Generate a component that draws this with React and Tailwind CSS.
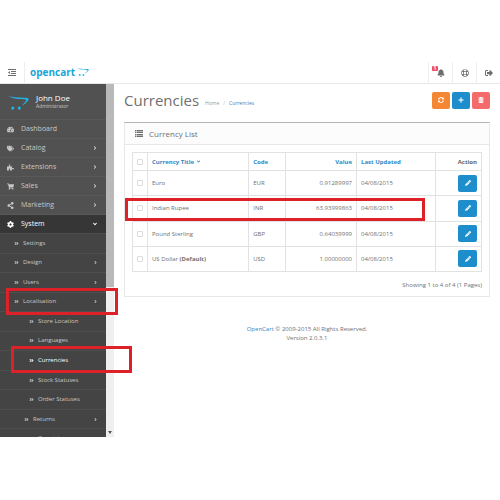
import React from "react";
import {
  FaAngleDoubleRight,
  FaAngleDown,
  FaAngleRight,
  FaBell,
  FaCog,
  FaPencilAlt,
  FaPlus,
  FaPuzzlePiece,
  FaRegLifeRing,
  FaShareAlt,
  FaShoppingCart,
  FaSignOutAlt,
  FaSyncAlt,
  FaTachometerAlt,
  FaTags,
  FaTrashAlt,
} from "react-icons/fa";

const menu = [
  { icon: FaTachometerAlt, label: "Dashboard" },
  { icon: FaTags, label: "Catalog", arrow: true },
  { icon: FaPuzzlePiece, label: "Extensions", arrow: true },
  { icon: FaShoppingCart, label: "Sales", arrow: true },
  { icon: FaShareAlt, label: "Marketing", arrow: true },
  { icon: FaCog, label: "System", arrow: true, open: true },
];

const subMenu = [
  { label: "Settings", indent: "pl-[14px]" },
  { label: "Design", indent: "pl-[14px]", arrow: true },
  { label: "Users", indent: "pl-[14px]", arrow: true },
  {
    label: "Localisation",
    indent: "pl-[14px]",
    arrow: true,
    mark: "left-[6px] w-[112px]",
  },
  { label: "Store Location", indent: "pl-[29px]" },
  { label: "Languages", indent: "pl-[29px]" },
  {
    label: "Currencies",
    indent: "pl-[29px]",
    active: true,
    mark: "left-[11px] w-[121px]",
  },
  { label: "Stock Statuses", indent: "pl-[29px]" },
  { label: "Order Statuses", indent: "pl-[29px]" },
  { label: "Returns", indent: "pl-[24px]", arrow: true },
  { label: "Countries", indent: "pl-[29px]" },
];

const currencies = [
  { title: "Euro", code: "EUR", value: "0.91289997", date: "04/08/2015" },
  {
    title: "Indian Rupee",
    code: "INR",
    value: "63.93999863",
    date: "04/08/2015",
    marked: true,
  },
  { title: "Pound Sterling", code: "GBP", value: "0.64039999", date: "04/08/2015" },
  {
    title: "US Dollar",
    isDefault: true,
    code: "USD",
    value: "1.00000000",
    date: "04/08/2015",
  },
];

const CartMark = ({ className }) => (
  <svg viewBox="0 0 63 43" className={className} fill="#22b0e0" aria-hidden="true">
    <path d="M0 0C12 4 28 5 50 5c12 0 16 3 10 10-5 6-11 11-18 15 5-7 14-14 13-18C52 8 18 13 0 0Z" />
    <circle cx="14" cy="37" r="5" />
    <circle cx="34" cy="37" r="5" />
  </svg>
);

const OutdentIcon = () => (
  <svg viewBox="0 0 16 14" className="h-[7px] w-2" fill="currentColor" aria-hidden="true">
    <path d="M0 0h16v2H0zM6 4h10v2H6zM6 8h10v2H6zM0 12h16v2H0zM4 4v6L0 7z" />
  </svg>
);

const ListIcon = () => (
  <svg viewBox="0 0 16 14" className="h-[7px] w-2" fill="currentColor" aria-hidden="true">
    <path d="M0 0h3v3H0zM4 0h12v3H4zM0 4h3v2H0zM4 4h12v2H4zM0 8h3v2H0zM4 8h12v2H4zM0 11h3v3H0zM4 11h12v3H4z" />
  </svg>
);

const Header = () => (
  <header className="flex h-[22px] items-stretch border-b border-[#e8e8e8] text-[#6d6d6d]">
    <button
      aria-label="Toggle menu"
      className="flex w-[25px] items-center justify-center border-r border-[#eeeeee]"
    >
      <OutdentIcon />
    </button>
    <a href="#" className="flex items-center pb-[2px] pl-[5px] text-[#1ba4d8]">
      <span className="text-[10px] leading-none font-bold">opencart</span>
      <CartMark className="ml-[2px] h-2 w-3" />
    </a>
    <nav className="ml-auto flex">
      <button
        aria-label="Notifications"
        className="relative flex w-6 items-center justify-center border-l border-[#eeeeee]"
      >
        <FaBell size={8} />
        <span className="absolute top-[4px] left-[3px] flex h-[5px] w-[6px] items-center justify-center rounded-[1px] bg-[#f0525f] text-[5px] leading-none font-bold text-white">
          1
        </span>
      </button>
      <button
        aria-label="Help"
        className="flex w-6 items-center justify-center border-l border-[#eeeeee]"
      >
        <FaRegLifeRing size={8} />
      </button>
      <button
        aria-label="Logout"
        className="flex w-6 items-center justify-center border-l border-[#eeeeee]"
      >
        <FaSignOutAlt size={8} />
      </button>
    </nav>
  </header>
);

const Sidebar = () => (
  <aside className="w-[106px] shrink-0 bg-[#515151] text-[#c8c8c8]">
    <div className="flex h-[35px] items-center pl-2">
      <CartMark className="mt-[3px] h-[14px] w-[21px]" />
      <div className="pl-[7px]">
        <p className="text-[8px] leading-[10px] text-white">John Doe</p>
        <p className="text-[5px] leading-[7px]">Administrator</p>
      </div>
    </div>
    <ul>
      {menu.map((item) => {
        const Icon = item.icon;
        return (
          <li key={item.label}>
            <a
              href="#"
              className={`flex h-[19px] items-center border-t border-[#595959] pr-2 pl-[7px] text-[7px] ${
                item.open ? "bg-[#363636] text-white" : ""
              }`}
            >
              <Icon size={7} />
              <span className="pl-[7px]">{item.label}</span>
              {item.arrow &&
                (item.open ? (
                  <FaAngleDown size={6} className="ml-auto" />
                ) : (
                  <FaAngleRight size={6} className="ml-auto" />
                ))}
            </a>
          </li>
        );
      })}
    </ul>
    <ul className="grid h-[215px] auto-rows-fr bg-[#444444]">
      {subMenu.map((item) => (
        <li key={item.label} className="relative">
          <a
            href="#"
            className={`flex h-full items-center border-t border-[#4e4e4e] pr-2 text-[6px] ${item.indent} ${
              item.active ? "text-white" : ""
            }`}
          >
            <FaAngleDoubleRight size={5} />
            <span className="pl-[4px]">{item.label}</span>
            {item.arrow && <FaAngleRight size={5} className="ml-auto" />}
          </a>
          {item.mark && (
            <span
              className={`pointer-events-none absolute -top-1 z-10 h-[27px] border-[3px] border-[#dc2129] ${item.mark}`}
            />
          )}
        </li>
      ))}
    </ul>
  </aside>
);

const CurrencyTable = () => (
  <table className="h-[120px] w-full table-fixed border-collapse text-[6px] leading-[8px] [&_td]:border [&_td]:border-[#e2e2e2] [&_td]:px-1 [&_th]:border [&_th]:border-[#e2e2e2] [&_th]:px-1">
    <thead>
      <tr className="h-[18px] text-left text-[#2f89c4]">
        <th className="w-[15px]">
          <input
            type="checkbox"
            aria-label="Select all"
            className="block size-[6px] appearance-none rounded-[1px] border border-[#dddddd]"
          />
        </th>
        <th className="w-[29%]">
          <a href="#" className="inline-flex items-center gap-[2px]">
            Currency Title <FaAngleDown size={5} />
          </a>
        </th>
        <th className="w-[37px]">
          <a href="#">Code</a>
        </th>
        <th className="text-right">
          <a href="#">Value</a>
        </th>
        <th className="w-[79px]">
          <a href="#">Last Updated</a>
        </th>
        <th className="w-[46px] text-right text-[#666666]">Action</th>
      </tr>
    </thead>
    <tbody>
      {currencies.map((row) => (
        <tr key={row.code} className="relative h-[25px]">
          <td>
            <input
              type="checkbox"
              aria-label={`Select ${row.title}`}
              className="block size-[6px] appearance-none rounded-[1px] border border-[#dddddd]"
            />
            {row.marked && (
              <span className="pointer-events-none absolute top-[2px] -left-[8px] z-10 h-[23px] w-[300px] border-[3px] border-[#dc2129]" />
            )}
          </td>
          <td>
            {row.title} {row.isDefault && <b>(Default)</b>}
          </td>
          <td>{row.code}</td>
          <td className="text-right">{row.value}</td>
          <td>{row.date}</td>
          <td>
            <button
              aria-label={`Edit ${row.title}`}
              className="ml-auto flex h-[17px] w-[19px] items-center justify-center rounded-[2px] bg-[#1e8dcc] text-white"
            >
              <FaPencilAlt size={6} />
            </button>
          </td>
        </tr>
      ))}
    </tbody>
  </table>
);

const App = () => {
  return (
    <div className="min-h-screen overflow-hidden bg-white pt-[62px] font-['Open_Sans',sans-serif] text-[#707070]">
      <Header />
      <div className="flex">
        <div className="flex h-[353px] [clip-path:inset(0_-40px_0_0)]">
          <Sidebar />
          {/* Scrollbar */}
          <div className="flex w-2 flex-col items-center bg-[#efefef]">
            <div className="h-[203px] w-full bg-[#b9b9b9]" />
            <span className="mt-auto mb-[3px] border-x-2 border-t-[3px] border-x-transparent border-t-[#555555]" />
          </div>
        </div>

        <main className="min-w-0 flex-1 px-[10px]">
          {/* Page heading */}
          <div className="flex h-[38px] items-center pb-[6px]">
            <h1 className="text-[15px] leading-5">Currencies</h1>
            <nav className="flex gap-1 pt-[7px] pl-[6px] text-[5px]">
              <a href="#" className="text-[#999999]">
                Home
              </a>
              <span className="text-[#bbbbbb]">/</span>
              <a href="#" className="text-[#3c7fc0]">
                Currencies
              </a>
            </nav>
            <div className="ml-auto flex gap-[2px] text-white">
              <button
                aria-label="Refresh"
                className="flex h-[17px] w-[18px] items-center justify-center rounded-[2px] bg-[#f38733]"
              >
                <FaSyncAlt size={6} />
              </button>
              <button
                aria-label="Add new"
                className="flex h-[17px] w-[18px] items-center justify-center rounded-[2px] bg-[#1e8dcc]"
              >
                <FaPlus size={6} />
              </button>
              <button
                aria-label="Delete"
                className="flex h-[17px] w-[18px] items-center justify-center rounded-[2px] bg-[#f56b6b]"
              >
                <FaTrashAlt size={6} />
              </button>
            </div>
          </div>

          {/* Currency list */}
          <section className="border border-t-[#b4b4b4] border-r-[#e8e8e8] border-b-[#e8e8e8] border-l-[#e8e8e8]">
            <div className="flex h-[22px] items-center border-b border-[#e8e8e8] bg-[#fcfcfc] pl-[10px]">
              <ListIcon />
              <h3 className="pl-[6px] text-[8px]">Currency List</h3>
            </div>
            <div className="p-[7px]">
              <CurrencyTable />
              <p className="pt-[9px] text-right text-[6px] leading-[8px]">
                Showing 1 to 4 of 4 (1 Pages)
              </p>
            </div>
          </section>

          <footer className="pt-7 text-center text-[6px] leading-[9px]">
            <p>
              <a href="#" className="text-[#3c7fc0]">
                OpenCart
              </a>{" "}
              © 2009-2015 All Rights Reserved.
            </p>
            <p>Version 2.0.3.1</p>
          </footer>
        </main>
      </div>
    </div>
  );
};

export default App;
